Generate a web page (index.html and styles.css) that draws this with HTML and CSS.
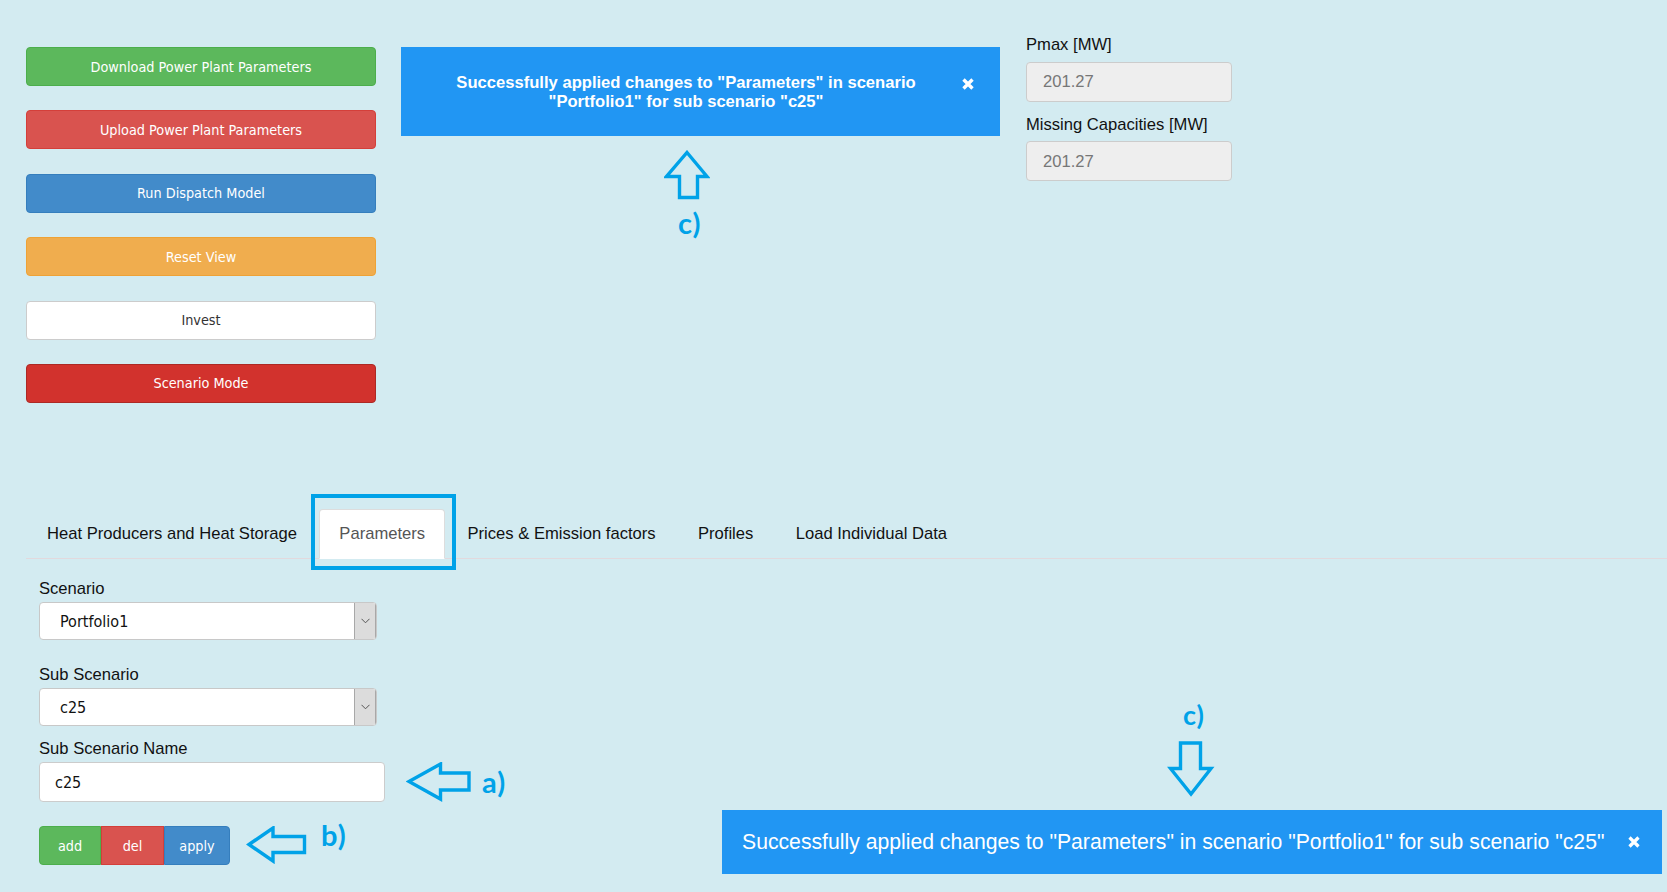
FILE: index.html
```html
<!DOCTYPE html>
<html>
<head>
<meta charset="utf-8">
<link rel="stylesheet" href="styles.css">
</head>
<body>
<div class="top">
  <div class="btn-col">
    <div class="btn btn-success">Download Power Plant Parameters</div>
    <div class="btn btn-danger">Upload Power Plant Parameters</div>
    <div class="btn btn-primary">Run Dispatch Model</div>
    <div class="btn btn-warning">Reset View</div>
    <div class="btn btn-default">Invest</div>
    <div class="btn btn-scenario">Scenario Mode</div>
  </div>
  <div class="mid">
    <div class="alert-top">
      <div class="alert-text">Successfully applied changes to "Parameters" in scenario "Portfolio1" for sub scenario "c25"</div>
      <svg class="close-x" width="14" height="14" viewBox="0 0 14 14"><path d="M2.5 2.5 L11.5 11.5 M11.5 2.5 L2.5 11.5" stroke="#fff" stroke-width="3.4" stroke-linecap="butt"/></svg>
    </div>
  </div>
  <div class="side">
    <div class="side-label">Pmax [MW]</div>
    <div class="ro-input first">201.27</div>
    <div class="side-label">Missing Capacities [MW]</div>
    <div class="ro-input">201.27</div>
  </div>
</div>

<ul class="nav">
  <li class="tab">Heat Producers and Heat Storage</li>
  <li class="tab active">Parameters</li>
  <li class="tab">Prices &amp; Emission factors</li>
  <li class="tab">Profiles</li>
  <li class="tab">Load Individual Data</li>
</ul>

<div class="tab-content">
  <div class="field-label">Scenario</div>
  <div class="select sel-1"><span class="sel-value">Portfolio1</span><span class="sel-arrow"><svg width="9" height="6" viewBox="0 0 9 6"><path d="M0.5 0.8 L4.5 4.8 L8.5 0.8" fill="none" stroke="#555" stroke-width="1"/></svg></span></div>
  <div class="field-label">Sub Scenario</div>
  <div class="select sel-2"><span class="sel-value">c25</span><span class="sel-arrow"><svg width="9" height="6" viewBox="0 0 9 6"><path d="M0.5 0.8 L4.5 4.8 L8.5 0.8" fill="none" stroke="#555" stroke-width="1"/></svg></span></div>
  <div class="field-label">Sub Scenario Name</div>
  <div class="text-input">c25</div>
  <div class="btn-group">
    <div class="gbtn g-add">add</div>
    <div class="gbtn g-del">del</div>
    <div class="gbtn g-apply">apply</div>
  </div>
</div>

<!-- annotations (overlay) -->
<div class="hl-box"></div>

<svg class="ann ann-up" width="46" height="50" viewBox="0 0 46 50"><path d="M23 2.5 L43 26.5 L33.5 26.5 L33.5 47.5 L15.5 47.5 L15.5 26.5 L2.5 26.5 Z" fill="none" stroke="#00a2e8" stroke-width="3.4" stroke-linejoin="miter"/></svg>
<span class="ann-txt t-c1">c)</span>

<span class="ann-txt t-c2">c)</span>
<svg class="ann ann-down" width="48" height="56" viewBox="0 0 48 56"><path d="M13.5 2 L33.5 2 L33.5 27.5 L44 27.5 L24 53 L3.5 27.5 L13.5 27.5 Z" fill="none" stroke="#00a2e8" stroke-width="3.4" stroke-linejoin="miter"/></svg>

<svg class="ann ann-a" width="66" height="40" viewBox="0 0 66 40"><path d="M3 19.5 L34.5 2 L34.5 11 L63 11 L63 28 L34.5 28 L34.5 37 Z" fill="none" stroke="#00a2e8" stroke-width="3.4" stroke-linejoin="miter"/></svg>
<span class="ann-txt t-a">a)</span>

<svg class="ann ann-b" width="62" height="38" viewBox="0 0 62 38"><path d="M3 18.5 L27 2 L27 10.5 L58.5 10.5 L58.5 26.5 L27 26.5 L27 35 Z" fill="none" stroke="#00a2e8" stroke-width="3.4" stroke-linejoin="miter"/></svg>
<span class="ann-txt t-b">b)</span>

<div class="toast">
  <span class="toast-text">Successfully applied changes to "Parameters" in scenario "Portfolio1" for sub scenario "c25"</span>
  <svg class="toast-x" width="14" height="14" viewBox="0 0 14 14"><path d="M2.5 2.5 L11.5 11.5 M11.5 2.5 L2.5 11.5" stroke="#fff" stroke-width="3.2"/></svg>
</div>
</body>
</html>
```

FILE: styles.css
```css
html, body {
  margin: 0;
  padding: 0;
}
body {
  background: #d3ebf1;
  font-family: "Liberation Sans", Arial, sans-serif;
  color: #111;
  width: 1667px;
  height: 892px;
  overflow: hidden;
  position: relative;
}

.top {
  display: flex;
  align-items: flex-start;
  padding: 34px 0 0 26px;
}

.btn-col {
  width: 350px;
  display: flex;
  flex-direction: column;
  gap: 24.4px;
  margin-top: 13px;
}

.btn, .gbtn {
  font-family: "DejaVu Sans Condensed", "DejaVu Sans", sans-serif;
  font-stretch: semi-condensed;
  font-size: 14.3px;
  color: #fff;
  display: flex;
  align-items: center;
  justify-content: center;
  box-sizing: border-box;
}
.btn {
  height: 39px;
  border-radius: 4px;
  border: 1px solid transparent;
}
.btn-success { background: #5cb85c; border-color: #4cae4c; }
.btn-danger { background: #d9534f; border-color: #d43f3a; }
.btn-primary { background: #428bca; border-color: #357ebd; }
.btn-warning { background: #f0ad4e; border-color: #eea236; }
.btn-default { background: #fff; border-color: #ccc; color: #333; }
.btn-scenario { background: #d2322d; border-color: #ac2925; }

.mid {
  width: 599px;
  margin-left: 25px;
  margin-top: 13px;
}
.alert-top {
  height: 89px;
  background: #2196f3;
  display: flex;
  align-items: center;
  padding: 0 25px 0 20px;
  box-sizing: border-box;
}
.alert-text {
  flex: 1;
  color: #fff;
  font-weight: bold;
  font-size: 16.6px;
  line-height: 19px;
  text-align: center;
}
.close-x {
  align-self: flex-start;
  margin-top: 30px;
  margin-left: 10px;
  flex: none;
}

.side {
  width: 206px;
  margin-left: 26px;
  padding-top: 1.4px;
}
.side-label {
  font-size: 16.6px;
  line-height: 19px;
  color: #111;
  margin-bottom: 7.5px;
}
.ro-input {
  height: 40px;
  box-sizing: border-box;
  background: #eee;
  border: 1px solid #ccc;
  border-radius: 4px;
  color: #777;
  font-size: 16.6px;
  padding-left: 16px;
  padding-top: 1px;
  display: flex;
  align-items: center;
}
.ro-input.first {
  margin-bottom: 13px;
}

.nav {
  list-style: none;
  margin: 106px 0 0 26px;
  padding: 0;
  display: flex;
  border-bottom: 1px solid #e2d9dd;
}
.tab {
  font-size: 16.6px;
  line-height: 24px;
  padding: 12.5px 19.2px 11.5px;
  margin-right: 2px;
  margin-bottom: -1px;
  border: 1px solid transparent;
  border-radius: 4px 4px 0 0;
  color: #111;
}
.tab:first-child {
  padding-left: 20px;
}
.tab.active {
  background: #fff;
  border-color: #ddd #ddd transparent #ddd;
  color: #555;
}

.tab-content {
  padding: 20.5px 0 0 39px;
}
.field-label {
  font-size: 16.6px;
  line-height: 19px;
  margin-bottom: 4px;
  color: #111;
}
.select {
  width: 338px;
  height: 37.5px;
  box-sizing: border-box;
  border: 1px solid #c8c8c8;
  border-radius: 4px;
  background: #fff;
  display: flex;
  align-items: stretch;
  overflow: hidden;
}
.sel-1 { margin-bottom: 25.5px; }
.sel-2 { margin-bottom: 13.5px; }
.sel-value {
  flex: 1;
  font-family: "DejaVu Sans Condensed", "DejaVu Sans", sans-serif;
  font-stretch: semi-condensed;
  font-size: 16px;
  color: #111;
  padding-left: 20px;
  display: flex;
  align-items: center;
}
.sel-arrow {
  width: 20px;
  background: #dcdcdc;
  border-left: 1px solid #a8a8a8;
  border-right: 1px solid #a8a8a8;
  display: flex;
  align-items: center;
  justify-content: center;
}
.text-input {
  width: 346px;
  height: 39.5px;
  box-sizing: border-box;
  border: 1px solid #ccc;
  border-radius: 4px;
  background: #fff;
  font-family: "DejaVu Sans Condensed", "DejaVu Sans", sans-serif;
  font-stretch: semi-condensed;
  font-size: 16px;
  color: #111;
  padding-left: 15px;
  display: flex;
  align-items: center;
  margin-bottom: 24.5px;
}
.btn-group {
  display: flex;
}
.gbtn {
  height: 39px;
  border: 1px solid transparent;
}
.g-add { width: 62px; background: #5cb85c; border-color: #4cae4c; border-radius: 4px 0 0 4px; }
.g-del { width: 63px; background: #d9534f; border-color: #d43f3a; }
.g-apply { width: 66px; background: #428bca; border-color: #357ebd; border-radius: 0 4px 4px 0; }

/* annotations */
.hl-box {
  position: absolute;
  left: 311px;
  top: 494px;
  width: 145px;
  height: 76px;
  box-sizing: border-box;
  border: 4.5px solid #00a2e8;
}
.ann {
  position: absolute;
}
.ann-up { left: 664px; top: 150px; }
.ann-down { left: 1167px; top: 741px; }
.ann-a { left: 406px; top: 762px; }
.ann-b { left: 246px; top: 826px; }
.ann-txt {
  position: absolute;
  font-family: Lato, "Open Sans", sans-serif;
  font-weight: bold;
  color: #00a2e8;
  font-size: 29px;
  line-height: 1;
  letter-spacing: 1px;
}
.t-c1 { left: 678px; top: 208px; }
.t-c2 { left: 1183px; top: 701px; font-size: 27px; }
.t-a { left: 482px; top: 767px; }
.t-b { left: 321px; top: 820px; }

.toast {
  position: absolute;
  left: 722px;
  top: 810px;
  width: 940px;
  height: 64px;
  box-sizing: border-box;
  background: #2196f3;
  display: flex;
  align-items: center;
  justify-content: space-between;
  padding: 0 21px 0 20px;
}
.toast-text {
  color: #fff;
  font-size: 21.2px;
  white-space: nowrap;
}
.toast-x { flex: none; }
```
